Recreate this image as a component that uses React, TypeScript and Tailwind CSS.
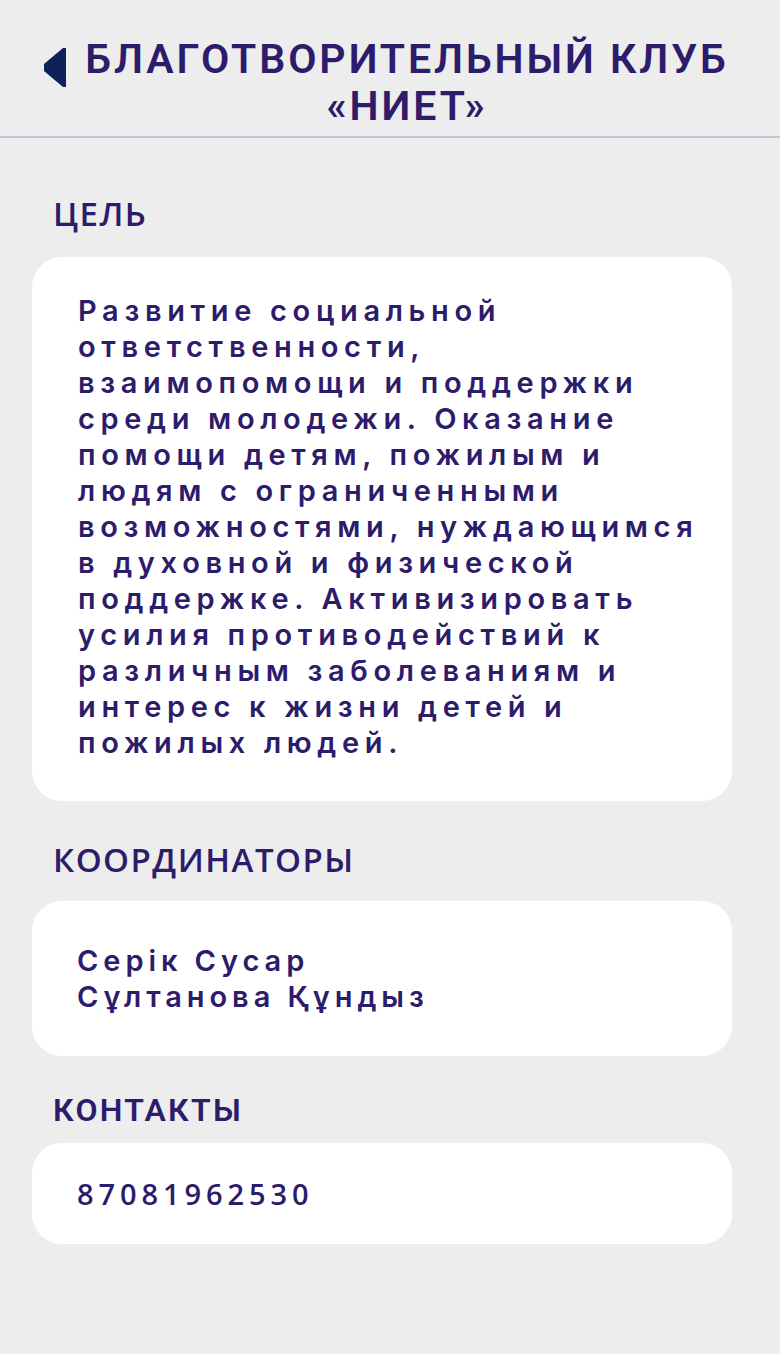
const goalLines = [
  'Развитие социальной',
  'ответственности,',
  'взаимопомощи и поддержки',
  'среди молодежи. Оказание',
  'помощи детям, пожилым и',
  'людям с ограниченными',
  'возможностями, нуждающимся',
  'в духовной и физической',
  'поддержке. Активизировать',
  'усилия противодействий к',
  'различным заболеваниям и',
  'интерес к жизни детей и',
  'пожилых людей.',
];

const coordinators = ['Серік Сусар', 'Сұлтанова Құндыз'];

const App = () => {
  return (
    <div
      className="min-h-[1354px] w-full bg-[#ededed] text-[#2d1b6b]"
      style={{ fontFamily: '"Open Sans", "Liberation Sans", sans-serif' }}
    >
      {/* Header */}
      <header className="flex h-[138px] items-start border-b-2 border-[#c3c2d8] pl-[44px] pr-8 pt-[36px]">
        <button className="mt-3 flex h-[39px] w-[22px] shrink-0 items-center">
          <svg viewBox="0 0 22 39" className="h-[39px] w-[22px]">
            <path d="M19 0 L22 0 L22 39 L19 39 L0 23 L0 16 Z" fill="#0f2257" />
          </svg>
        </button>
        <h1
          className="flex-1 text-center text-[41px] font-semibold uppercase leading-[47px] tracking-[0.072em]"
          style={{ fontFamily: 'Roboto, "Liberation Sans", sans-serif' }}
        >
          Благотворительный клуб
          <br />
          «Ниет»
        </h1>
      </header>

      <main className="pl-8 pr-12">
        {/* Goal */}
        <h2 className="mt-[58px] pl-[21px] text-[33px] font-semibold uppercase leading-9 tracking-[0.045em]">Цель</h2>
        <div
          className="mt-[25px] rounded-[30px] bg-white pb-10 pl-[46px] pr-6 pt-9"
          style={{ fontFamily: 'Inter, "Open Sans", sans-serif' }}
        >
          {goalLines.map((line, i) => (
            <p key={i} className="whitespace-nowrap text-[29px] font-semibold leading-9 tracking-[0.195em]">
              {line}
            </p>
          ))}
        </div>

        {/* Coordinators */}
        <h2 className="mt-[41px] pl-[21px] text-[33px] font-semibold uppercase leading-9 tracking-[0.045em]">
          Координаторы
        </h2>
        <div
          className="mt-[23px] rounded-[30px] bg-white pb-[41px] pl-[45px] pr-6 pt-[42px]"
          style={{ fontFamily: 'Inter, "Open Sans", sans-serif' }}
        >
          {coordinators.map((name) => (
            <p key={name} className="text-[29px] font-semibold leading-9 tracking-[0.17em]">
              {name}
            </p>
          ))}
        </div>

        {/* Contacts */}
        <h2
          className="mt-9 pl-[21px] text-[32px] font-semibold uppercase leading-9 tracking-[0.07em]"
          style={{ fontFamily: 'Roboto, "Liberation Sans", sans-serif' }}
        >
          Контакты
        </h2>
        <div className="mt-[15px] rounded-[30px] bg-white pb-8 pl-[45px] pr-6 pt-[33px]">
          <p className="text-[29px] font-semibold leading-9 tracking-[0.17em]">87081962530</p>
        </div>
      </main>
    </div>
  );
};

export default App;
